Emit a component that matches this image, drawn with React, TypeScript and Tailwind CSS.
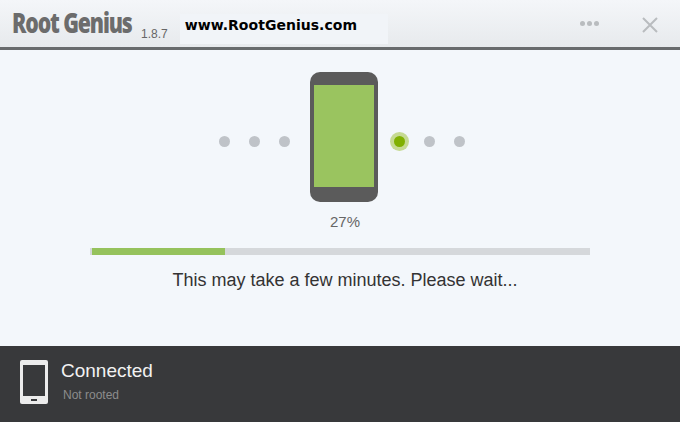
export default function App() {
  const sans = "font-['Liberation_Sans',Arial,sans-serif]";

  return (
    <div className={`flex h-[422px] w-[680px] flex-col overflow-hidden bg-[#f3f7fb] ${sans}`}>
      {/* title bar */}
      <header className="flex h-[50px] shrink-0 items-center border-b-[3px] border-[#686b6d] bg-gradient-to-b from-[#f4f6f9] to-[#e7eaed]">
        <div className="ml-[12px] w-[121px] shrink-0">
          <span className="inline-block origin-left scale-x-[0.76] whitespace-nowrap font-['Open_Sans',sans-serif] text-[28px] font-extrabold leading-none tracking-[-1.5px] text-[#6c6c6c]">
            Root Genius
          </span>
        </div>
        <span className="ml-[8px] mt-[21px] text-[12px] leading-none text-[#666]">1.8.7</span>
        <div className="ml-[12px] mt-[10px] flex h-[30px] w-[208px] items-start bg-[#f1f4f8] pl-[5px] pt-[4px]">
          <span className="font-['DejaVu_Sans',sans-serif] text-[14px] font-bold leading-none tracking-[0.03px] text-black">
            www.RootGenius.com
          </span>
        </div>
        <div className="ml-auto mr-[43px] flex gap-[2px]">
          <span className="size-[5px] rounded-full bg-[#b9bcbf]" />
          <span className="size-[5px] rounded-full bg-[#b9bcbf]" />
          <span className="size-[5px] rounded-full bg-[#b9bcbf]" />
        </div>
        <svg width="16" height="16" viewBox="0 0 16 16" className="mr-[22px] mt-[2px]" fill="none" stroke="#b9bcbf" strokeWidth="2">
          <path d="M1 1 L15 15 M15 1 L1 15" />
        </svg>
      </header>

      {/* progress */}
      <main className="flex flex-1 flex-col">
        <div className="mt-[22px] flex items-center pl-[219px]">
          <span className="mt-[8px] size-[11px] rounded-full bg-[#bfc3c8]" />
          <span className="ml-[19px] mt-[8px] size-[11px] rounded-full bg-[#bfc3c8]" />
          <span className="ml-[19px] mt-[8px] size-[11px] rounded-full bg-[#bfc3c8]" />
          <div className="ml-[20px] flex h-[130px] w-[68px] flex-col justify-start rounded-[10px] bg-[#5b5b5b] px-[4px] pt-[13px]">
            <div className="h-[102px] bg-[#9ac45f]" />
          </div>
          <span className="ml-[12px] mt-[8px] flex size-[19px] items-center justify-center rounded-full bg-[#c6da92]">
            <span className="size-[11px] rounded-full bg-[#80b000]" />
          </span>
          <span className="ml-[15px] mt-[8px] size-[11px] rounded-full bg-[#bfc3c8]" />
          <span className="ml-[19px] mt-[8px] size-[11px] rounded-full bg-[#bfc3c8]" />
        </div>
        <p className="mt-[11px] pl-[330px] text-[15px] leading-[18px] text-[#666]">27%</p>
        <div className="ml-[90px] mt-[17px] h-[7px] w-[500px] bg-[#d5d8db] pl-[2px]">
          <div className="h-full w-[133px] bg-[#95c25c]" />
        </div>
        <p className="mt-[14px] pl-[10px] text-center text-[18px] leading-[22px] text-[#333]">
          This may take a few minutes. Please wait...
        </p>
      </main>

      {/* device status */}
      <footer className="flex h-[76px] shrink-0 items-center bg-[#38393b] pl-[20px]">
        <svg width="28" height="44" viewBox="0 0 28 44" className="mb-[4px]">
          <rect width="28" height="44" rx="2" fill="#ececec" />
          <rect x="3" y="5" width="22" height="31" fill="#38393b" />
          <rect x="11" y="39" width="6" height="2" fill="#38393b" />
        </svg>
        <div className="mb-[7px] ml-[13px] flex flex-col">
          <span className="text-[19px] leading-[22px] text-[#f2f2f2]">Connected</span>
          <span className="ml-[2px] mt-[6px] text-[12px] leading-[14px] text-[#8c8c8c]">Not rooted</span>
        </div>
      </footer>
    </div>
  );
}
